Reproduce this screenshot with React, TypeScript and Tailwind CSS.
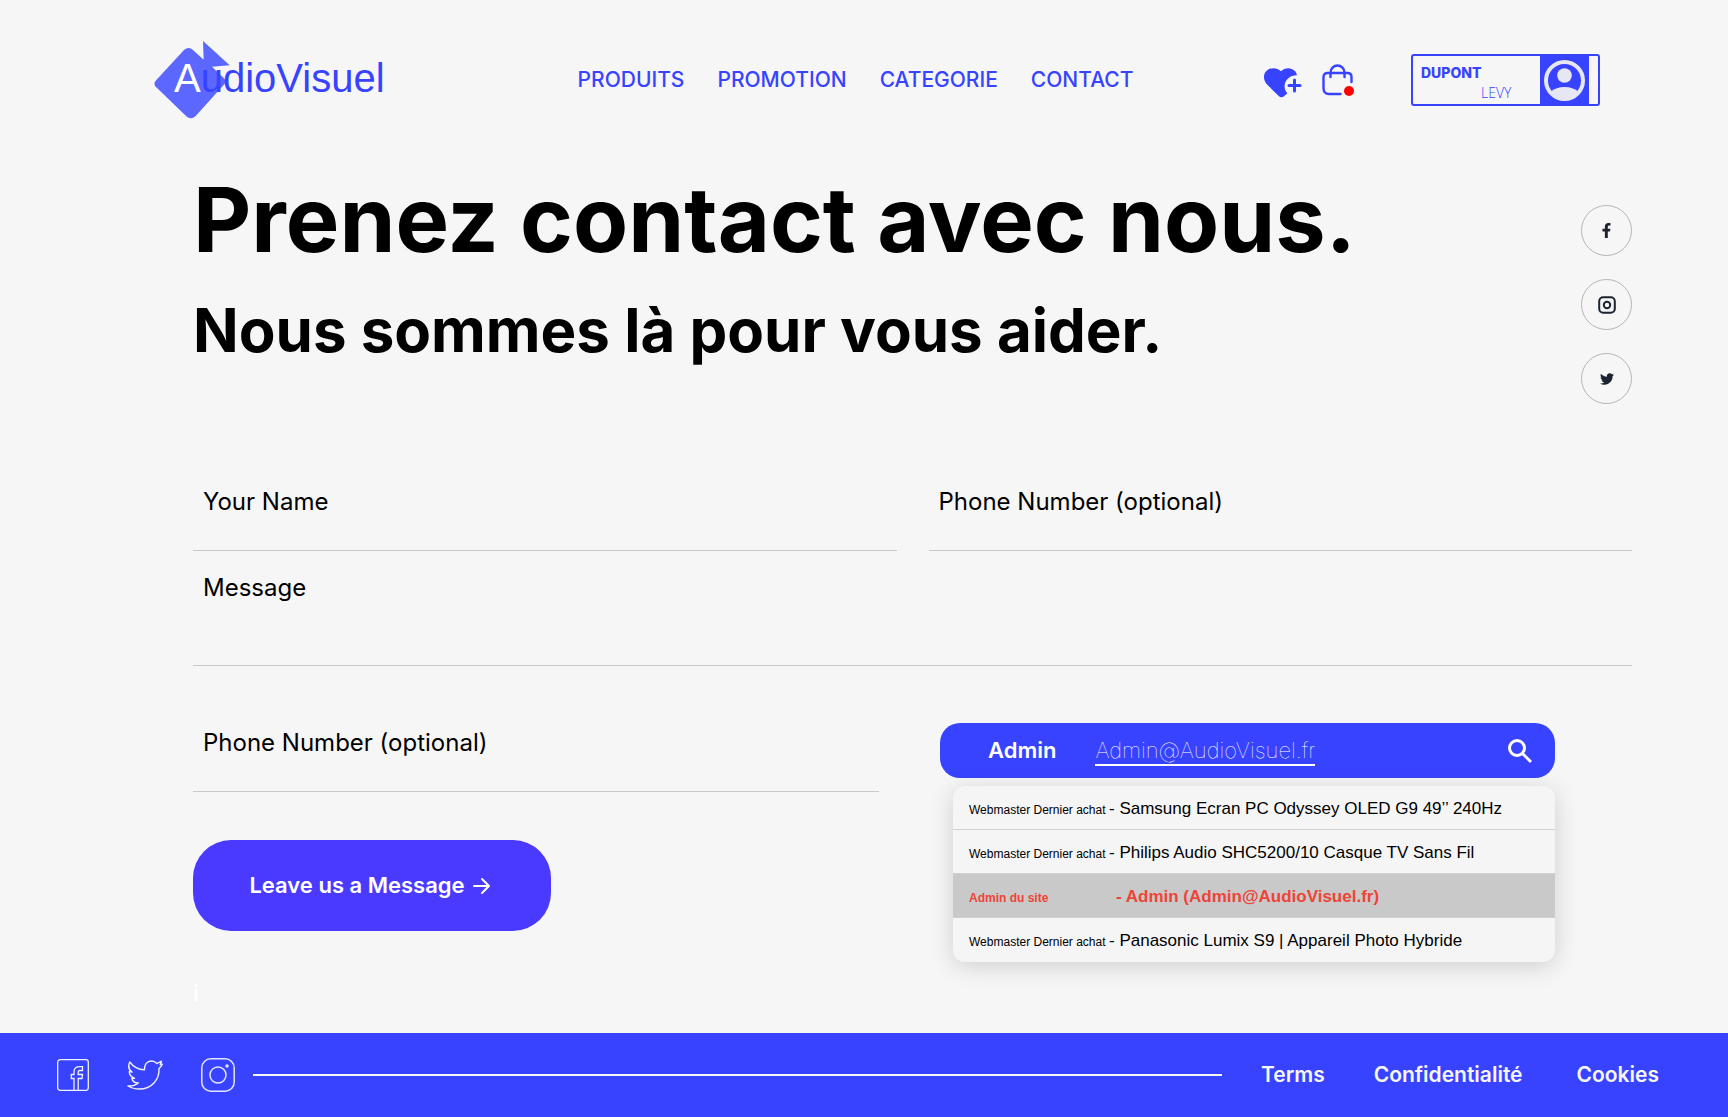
import type { ReactNode } from 'react';
import { FaFacebookF, FaTwitter } from 'react-icons/fa';

const navItems = ['PRODUITS', 'PROMOTION', 'CATEGORIE', 'CONTACT'];

const results = [
  { tag: 'Webmaster Dernier achat', label: '- Samsung Ecran PC Odyssey OLED G9 49’’ 240Hz' },
  { tag: 'Webmaster Dernier achat', label: '- Philips Audio SHC5200/10 Casque TV Sans Fil' },
  { tag: 'Admin du site', label: '- Admin (Admin@AudioVisuel.fr)', active: true },
  { tag: 'Webmaster Dernier achat', label: '- Panasonic Lumix S9 | Appareil Photo Hybride' },
];

const fieldClass =
  'h-[98px] w-full border-b border-[#c9c9c9] bg-transparent px-2.5 text-2xl text-black outline-none placeholder:text-black placeholder:opacity-100';

function Logo() {
  return (
    <a href="#" className="relative flex h-[78px] items-center pl-5 font-['Liberation_Sans',Arial,sans-serif] text-[40px] leading-none text-[#3843ff]">
      <svg className="absolute top-0 left-0 h-[78px] w-[76px]" viewBox="0 0 228 234" aria-hidden="true">
        <path
          fill="#5b67ff"
          d="M90 27 L5 119 Q-3 129 6 138 L97 226 Q111 238 125 225 L211 130 Q218 121 210 112 L174 77 L227 73 L147 0 L149 56 L117 27 Q104 15 90 27Z"
        />
      </svg>
      <span className="relative pb-1"><span className="text-white">A</span>udioVisuel</span>
    </a>
  );
}

function HeartPlus() {
  return (
    <svg width="38" height="30" viewBox="0 0 38 30" aria-hidden="true">
      <path
        fill="#3843ff"
        d="M17 3.2C20.5-.6 27 -.9 30.6 2.7C32 4 32.7 5.6 32.9 7.2C26 7.2 20.6 12 20.6 18.300C20.600 21 21.600 23.400 23.400 25.200L20 28.300Q17.400 30 15 28.300L3.600 17C-1 12.400-1.300 6.300 2.700 2.700C6.500-.8 13-.8 17 3.200Z"
      />
      <path d="M30.500 12v11M25 17.500h11" stroke="#3843ff" strokeWidth="3" strokeLinecap="round" />
    </svg>
  );
}

function Bag() {
  return (
    <svg width="34" height="34" viewBox="0 0 34 34" fill="none" aria-hidden="true">
      <path
        d="M18.500 30H7Q1.500 30 1.500 24V13Q1.500 9 5.500 9H25.500Q29.500 9 29.500 13V18M8.500 13V8.500A7 7 0 0 1 22.500 8.500V13"
        stroke="#3843ff"
        strokeWidth="2.400"
        strokeLinecap="round"
      />
      <circle cx="27" cy="27" r="5" fill="#ff0000" />
    </svg>
  );
}

function Avatar() {
  return (
    <svg width="41" height="41" viewBox="0 0 41 41" fill="none" aria-hidden="true">
      <circle cx="20.500" cy="20.500" r="18.500" stroke="#e6e7f2" strokeWidth="4" />
      <circle cx="20.500" cy="15.500" r="7.300" fill="#e6e7f2" />
      <path d="M7 31.500Q12 27 20.500 27Q29 27 34 31.500Q29 39 20.500 39Q12 39 7 31.500Z" fill="#e6e7f2" />
    </svg>
  );
}

function InstagramSmall() {
  return (
    <svg width="18" height="18" viewBox="0 0 18 18" fill="none" stroke="#1b2430" strokeWidth="2" aria-hidden="true">
      <rect x="1.200" y="1.200" width="15.600" height="15.600" rx="4" />
      <circle cx="9" cy="9" r="3.200" />
    </svg>
  );
}

function SocialCircle({ label, children }: { label: string; children: ReactNode }) {
  return (
    <a href="#" aria-label={label} className="flex size-[51px] items-center justify-center rounded-full border border-[#b5b5b5] text-[#1b2430]">
      {children}
    </a>
  );
}

function FacebookOutline() {
  return (
    <svg width="32" height="32" viewBox="0 0 32 32" fill="none" stroke="#f0f1ff" strokeWidth="1.300" aria-hidden="true">
      <rect x=".700" y=".700" width="30.600" height="30.600" rx="2.500" />
      <path d="M17 31V19.500H14.300V15.500H17V13Q17 8 22 7.700H25.500V11.500H23Q21.200 11.500 21.200 13.500V15.500H25.500L25 19.500H21.200V31" />
    </svg>
  );
}

function TwitterOutline() {
  return (
    <svg width="36" height="30" viewBox="0 0 36 30" fill="none" stroke="#f0f1ff" strokeWidth="1.400" strokeLinejoin="round" aria-hidden="true">
      <path d="M2.800 2C6.500 7 12 9.800 17.500 9.700C17.300 4.500 20 1 24.500 1C27 1 28.500 2 30 3.500L34.500 1.200L33.200 4.500L35.200 4.300L34 6.500L32 8.500C32.500 19 25 29 12.500 29C8 29 4 28 1 26C5 26.200 8.500 25.200 11.300 23C8 23 5.500 21 4.800 18.500L7.500 18.300C4 17 2.200 14.500 2.300 11.500L5 12C1.800 9.500 1 5.500 2.800 2Z" />
    </svg>
  );
}

function InstagramOutline() {
  return (
    <svg width="34" height="34" viewBox="0 0 34 34" fill="none" stroke="#e4e6ff" strokeWidth="1.500" aria-hidden="true">
      <rect x=".800" y=".800" width="32.400" height="32.400" rx="9" />
      <circle cx="17" cy="17" r="8" />
      <circle cx="26" cy="8" r="1" fill="#f0f1ff" />
    </svg>
  );
}

export default function App() {
  return (
    <div className="flex min-h-screen flex-col bg-[#f6f6f6] font-[Inter,sans-serif] text-black">
      <header className="flex h-40 items-center pr-32 pl-[154px]">
        <Logo />
        <nav className="ml-[193px] flex gap-[33px] text-[21px] font-medium text-[#3843ff]">
          {navItems.map((item) => (
            <a key={item} href="#">{item}</a>
          ))}
        </nav>
        <div className="ml-auto flex items-center">
          <button type="button" aria-label="Favoris" className="pt-1.5">
            <HeartPlus />
          </button>
          <button type="button" aria-label="Panier" className="ml-5 pt-0.5">
            <Bag />
          </button>
          <button
            type="button"
            className="ml-[55px] flex h-[52px] w-[189px] rounded-[3px] border-2 border-[#3843ff] pr-[9px] text-left font-['Open_Sans',sans-serif] text-sm leading-5 text-[#3843ff]"
          >
            <span className="flex flex-1 flex-col pt-[7px] pl-2">
              <span className="font-[Inter,sans-serif] font-extrabold">DUPONT</span>
              <span className="pl-[60px] font-light">LEVY</span>
            </span>
            <span className="flex h-full w-[49px] items-center justify-center bg-[#3843ff]">
              <Avatar />
            </span>
          </button>
        </div>
      </header>

      <main className="flex-1 pt-[15px] pr-24 pb-7 pl-[193px]">
        <div className="flex justify-between">
          <div>
            <h1 className="text-[90px] leading-[90px] font-bold">Prenez contact avec nous.</h1>
            <h2 className="mt-[35px] text-[60px] leading-[60px] font-bold">Nous sommes là pour vous aider.</h2>
          </div>
          <div className="flex flex-col gap-[23px] pt-[30px]">
            <SocialCircle label="Facebook"><FaFacebookF size={15} /></SocialCircle>
            <SocialCircle label="Instagram"><InstagramSmall /></SocialCircle>
            <SocialCircle label="Twitter"><FaTwitter size={14} /></SocialCircle>
          </div>
        </div>

        <form className="mt-[49px]">
          <div className="grid grid-cols-2 gap-8">
            <input aria-label="Your Name" placeholder="Your Name" className={fieldClass} />
            <input aria-label="Phone Number (optional)" placeholder="Phone Number (optional)" className={fieldClass} />
          </div>
          <textarea
            aria-label="Message"
            placeholder="Message"
            className="block h-[115px] w-full resize-none border-b border-[#c9c9c9] bg-transparent px-2.5 pt-[21px] text-2xl outline-none placeholder:text-black placeholder:opacity-100"
          />
          <div className="mt-7 grid grid-cols-[686fr_692fr] gap-[61px]">
            <div>
              <input aria-label="Phone Number (optional)" placeholder="Phone Number (optional)" className={fieldClass} />
              <button
                type="button"
                className="mt-12 flex h-[91px] w-[358px] items-center justify-center gap-2 rounded-[38px] bg-[#4a3aff] pr-1 text-[22px] font-semibold text-white"
              >
                Leave us a Message
                <svg width="18" height="18" viewBox="0 0 18 18" fill="none" stroke="#fff" strokeWidth="2" strokeLinecap="round" strokeLinejoin="round" aria-hidden="true">
                  <path d="M1 9H16M9 2L16 9L9 16" />
                </svg>
              </button>
              <p className="mt-[50px] text-[22px] leading-6 font-semibold text-white">i</p>
            </div>

            <div className="pt-[29px] pr-[77px]">
              <div className="flex h-[55px] items-center rounded-[20px] bg-[#3843ff] pr-[22px] pl-12 text-[22px] text-white">
                <label htmlFor="recipient" className="font-semibold">Admin</label>
                <input
                  id="recipient"
                  type="text"
                  defaultValue="Admin@AudioVisuel.fr"
                  className="ml-[39px] field-sizing-content border-b-2 border-white bg-transparent leading-7 font-thin outline-none"
                />
                <button type="button" aria-label="Rechercher" className="ml-auto">
                  <svg width="26" height="26" viewBox="0 0 26 26" fill="none" stroke="#fff" strokeWidth="3" aria-hidden="true">
                    <circle cx="10" cy="10" r="7.500" />
                    <path d="M15.500 15.500L24 24" />
                  </svg>
                </button>
              </div>
              <ul className="mt-2 ml-[13px] overflow-hidden rounded-xl bg-[#f5f5f5] font-['Liberation_Sans',Arial,sans-serif] shadow-[0_4px_24px_rgba(0,0,0,0.16)]">
                {results.map((row, index) => (
                  <li key={row.label} className={index < 3 ? 'h-11 border-b border-[#cfd1d4]' : 'h-11'}>
                    <button
                      type="button"
                      className={
                        row.active
                          ? 'flex h-full w-full items-baseline bg-[#c9c9c9] px-4 pt-2.5 text-left text-[17px] font-bold text-[#ee4438]'
                          : 'flex h-full w-full items-baseline px-4 pt-2.5 text-left text-[17px]'
                      }
                    >
                      <span className={row.active ? 'w-[147px] text-xs' : 'w-[140px] text-xs'}>{row.tag}</span>
                      <span>{row.label}</span>
                    </button>
                  </li>
                ))}
              </ul>
            </div>
          </div>
        </form>
      </main>

      <footer className="flex h-[84px] items-center bg-[#3843ff] pr-[69px] pl-[57px] text-[21px] font-semibold text-[#f6f6f6]">
        <div className="flex items-center gap-[38px]">
          <a href="#" aria-label="Facebook"><FacebookOutline /></a>
          <a href="#" aria-label="Twitter"><TwitterOutline /></a>
          <a href="#" aria-label="Instagram"><InstagramOutline /></a>
        </div>
        <hr className="ml-[18px] flex-1 border-t-2 border-[#f6f6f6]" />
        <nav className="ml-[39px] flex">
          <a href="#">Terms</a>
          <a href="#" className="ml-[49px]">Confidentialité</a>
          <a href="#" className="ml-[54px]">Cookies</a>
        </nav>
      </footer>
    </div>
  );
}
